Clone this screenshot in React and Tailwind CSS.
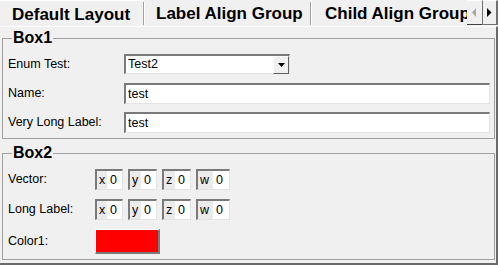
import React from "react";

const sunken =
  "border-t-2 border-l-2 border-t-[#7a7a7a] border-l-[#7a7a7a] border-b border-r border-b-[#e3e3e3] border-r-[#e3e3e3]";

const VecField = ({ axis, labelW, valueW }) => (
  <div className={`flex h-[21px] ${sunken}`}>
    <div className={`${labelW} flex items-center pl-[2px] bg-[#ebebeb]`}>{axis}</div>
    <div className={`${valueW} flex items-center pl-[3px] bg-white`}>0</div>
  </div>
);

const Vector = () => (
  <div className="flex gap-[5px]">
    <VecField axis="x" labelW="w-[10px]" valueW="w-[15px]" />
    <VecField axis="y" labelW="w-[11px]" valueW="w-[15px]" />
    <VecField axis="z" labelW="w-[11px]" valueW="w-[15px]" />
    <VecField axis="w" labelW="w-[15px]" valueW="w-[16px]" />
  </div>
);

const Row = ({ label, labelW, children, className = "" }) => (
  <div className={`flex items-center ${className}`}>
    <div className={`${labelW} shrink-0`}>{label}</div>
    {children}
  </div>
);

export default function App() {
  return (
    <div className="w-[498px] h-[265px] bg-[#f0f0f0] overflow-hidden flex flex-col text-[12.5px] text-black font-['Liberation_Sans',Arial,sans-serif]">
      {/* tab strip */}
      <div className="flex h-[26px] shrink-0 text-[17px] font-bold leading-none whitespace-nowrap">
        <div className="w-[143px] pl-[12px] pt-[5px] border-t border-white">Default Layout</div>
        <div className="flex w-[168px] border-l border-l-[#a0a0a0] border-r border-r-[#a0a0a0] mt-[2px] mb-[1px]">
          <div className="pl-[11px] pt-[3px] border-l border-white">Label Align Group</div>
        </div>
        <div className="flex-1 overflow-hidden pl-[13px] pt-[5px] border-l border-white">Child Align Group</div>
        <div className="flex h-[25px]">
          <div className="w-[15px] flex items-center justify-center border-b border-b-[#404040] border-t border-t-white">
            <svg width="5" height="9" viewBox="0 0 5 9">
              <path d="M4 0 L0 4.5 L4 9 Z" fill="#a8a8a8" />
            </svg>
          </div>
          <div className="w-[16px] flex items-center justify-center border-l border-l-[#707070] border-r-2 border-r-[#707070] border-b border-b-[#707070] border-t border-t-white">
            <svg width="5" height="9" viewBox="0 0 5 9">
              <path d="M0 0 L4.5 4.5 L0 9 Z" fill="#000" />
            </svg>
          </div>
        </div>
      </div>

      {/* page */}
      <div className="flex-1 flex flex-col pl-[2px] pr-[1px] pt-[3px] border-t border-t-white border-r-2 border-r-[#6a6a6a] border-b-2 border-b-[#6a6a6a]">
        <fieldset className="border border-[#a0a0a0] pl-[5px] pr-[4px] pt-[8px] pb-[5px] flex flex-col">
          <legend className="ml-[4px] px-[1px] text-[16px] font-bold leading-[16px]">Box1</legend>
          <Row label="Enum Test:" labelW="w-[116px]">
            <div className={`flex items-center h-[20px] w-[166px] bg-white ${sunken}`}>
              <div className="flex-1 pl-[2px]">Test2</div>
              <div className="w-[16px] h-[18px] flex items-center justify-center bg-[#f0f0f0] border-t border-l border-t-white border-l-white border-b border-r border-b-[#606060] border-r-[#606060]">
                <svg width="7" height="4" viewBox="0 0 7 4">
                  <path d="M0 0 L7 0 L3.5 4 Z" fill="#000" />
                </svg>
              </div>
            </div>
          </Row>
          <Row label="Name:" labelW="w-[116px]" className="mt-[9px]">
            <div className={`flex-1 h-[21px] bg-white flex items-center pl-[2px] ${sunken}`}>test</div>
          </Row>
          <Row label="Very Long Label:" labelW="w-[116px]" className="mt-[8px]">
            <div className={`flex-1 h-[21px] bg-white flex items-center pl-[2px] ${sunken}`}>test</div>
          </Row>
        </fieldset>

        <fieldset className="mt-[6px] border border-[#a0a0a0] pl-[5px] pr-[4px] pt-[8px] pb-[5px] flex flex-col">
          <legend className="ml-[4px] px-[1px] text-[16px] font-bold leading-[16px]">Box2</legend>
          <Row label="Vector:" labelW="w-[87px]">
            <Vector />
          </Row>
          <Row label="Long Label:" labelW="w-[87px]" className="mt-[9px]">
            <Vector />
          </Row>
          <Row label="Color1:" labelW="w-[87px]" className="mt-[9px]">
            <div className="w-[65px] h-[25px] bg-[#ff0000] border-t border-l border-t-white border-l-white border-b-2 border-r-2 border-b-[#7a7a7a] border-r-[#7a7a7a]" />
          </Row>
        </fieldset>
      </div>
    </div>
  );
}
